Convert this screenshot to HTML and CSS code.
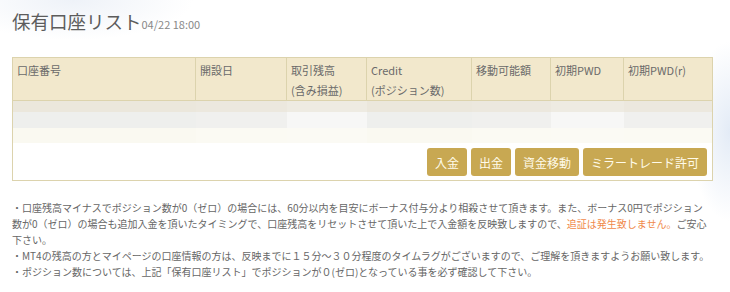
FILE: index.html
```html
<!DOCTYPE html>
<html lang="ja">
<head>
    <meta charset="UTF-8">
    <meta name="viewport" content="width=device-width, initial-scale=1.0">
    <title>保有口座リスト</title>
    <link rel="stylesheet" href="styles.css">
</head>
<body>
    <div class="page">
        <h1 class="page-title">保有口座リスト<span class="updated">04/22 18:00</span></h1>

        <div class="account-box">
            <table class="account-table">
                <thead>
                    <tr>
                        <th class="col-number">口座番号</th>
                        <th class="col-date">開設日</th>
                        <th class="col-balance">取引残高<br>(含み損益)</th>
                        <th class="col-credit">Credit<br>(ポジション数)</th>
                        <th class="col-movable">移動可能額</th>
                        <th class="col-pwd">初期PWD</th>
                        <th class="col-pwd-r">初期PWD(r)</th>
                    </tr>
                </thead>
                <tbody>
                    <!-- account data is masked in the screenshot -->
                    <tr>
                        <td><div class="masked masked-a"></div></td>
                        <td><div class="masked"></div></td>
                        <td><div class="masked masked-b"></div></td>
                        <td><div class="masked masked-a"></div></td>
                        <td><div class="masked"></div></td>
                        <td><div class="masked masked-b"></div></td>
                        <td><div class="masked"></div></td>
                    </tr>
                </tbody>
            </table>

            <div class="actions">
                <button class="action-btn">入金</button>
                <button class="action-btn">出金</button>
                <button class="action-btn">資金移動</button>
                <button class="action-btn">ミラートレード許可</button>
            </div>
        </div>

        <div class="notes">
            <p>・口座残高マイナスでポジション数が0（ゼロ）の場合には、60分以内を目安にボーナス付与分より相殺させて頂きます。また、ボーナス0円でポジション数が0（ゼロ）の場合も追加入金を頂いたタイミングで、口座残高をリセットさせて頂いた上で入金額を反映致しますので、<span class="warn">追証は発生致しません。</span>ご安心下さい。</p>
            <p class="one-line">・MT4の残高の方とマイページの口座情報の方は、反映までに１５分～３０分程度のタイムラグがございますので、ご理解を頂きますようお願い致します。</p>
            <p class="one-line">・ポジション数については、上記「保有口座リスト」でポジションが０(ゼロ)となっている事を必ず確認して下さい。</p>
        </div>
    </div>
</body>
</html>
```

FILE: styles.css
```css
:root {
    --gold: #c8a852;
    --beige: #f2e8cc;
    --line: #dcd3ad;
    --text: #666;
}

* {
    box-sizing: border-box;
    margin: 0;
    padding: 0;
}

body {
    font-family: "Noto Sans CJK JP", "Noto Sans", sans-serif;
    color: var(--text);
    background-color: #fff;
    background-image:
        radial-gradient(ellipse 40px 90px at 100% 45%, #e3ebf6 0, rgba(255,255,255,0) 100%),
        radial-gradient(ellipse 120px 40px at 10% 0, #eef2f8 0, rgba(255,255,255,0) 100%);
    background-repeat: no-repeat;
    min-height: 292px;
}

.page {
    width: 701px;
    margin-left: 12px;
}

.page-title {
    height: 34px;
    font-size: 18.5px;
    font-weight: normal;
    color: #5c5c5c;
    line-height: 26px;
    padding-top: 8px;
    margin-bottom: 23px;
}

.updated {
    font-size: 11px;
    line-height: 1;
    color: #888;
}

.account-box {
    border: 1px solid var(--line);
    background: #fff;
}

.account-table {
    width: 100%;
    table-layout: fixed;
    border-collapse: separate;
    border-spacing: 0;
}

.account-table th {
    height: 43px;
    padding: 2px 4px 0;
    font-size: 11px;
    font-weight: normal;
    line-height: 20px;
    text-align: left;
    vertical-align: top;
    color: #6a6a6a;
    background: var(--beige);
    border-right: 1px solid var(--line);
    border-bottom: 1px solid var(--line);
}

.account-table th:last-child {
    border-right: none;
}

.col-number { width: 183px; }
.col-date { width: 91px; }
.col-balance { width: 80px; }
.col-credit { width: 105px; }
.col-movable { width: 79px; }
.col-pwd { width: 73px; }
.col-pwd-r { width: 88px; }

.account-table td {
    padding: 0;
}

.masked {
    height: 42px;
    background: linear-gradient(#ece8de 0 11px, #f0f0ee 11px 27px, #fbfaf3 27px);
}

.masked-a {
    background: linear-gradient(#ebe7dc 0 11px, #eeefed 11px 27px, #faf9f1 27px);
}

.masked-b {
    background: linear-gradient(#eeebe2 0 11px, #f7f7f6 11px 27px, #fbfaf4 27px);
}

.actions {
    display: flex;
    justify-content: flex-end;
    gap: 4px;
    padding: 5px 5px 4px;
}

.action-btn {
    height: 28px;
    padding: 0 8px;
    font-family: inherit;
    font-size: 12px;
    color: #fffbea;
    background-color: var(--gold);
    border: none;
    border-radius: 3px;
    cursor: pointer;
}

.notes {
    width: 697px;
    margin-top: 19px;
    font-size: 10px;
    line-height: 16px;
}

.notes .one-line {
    white-space: nowrap;
}

.warn {
    color: #f0894a;
}
```
